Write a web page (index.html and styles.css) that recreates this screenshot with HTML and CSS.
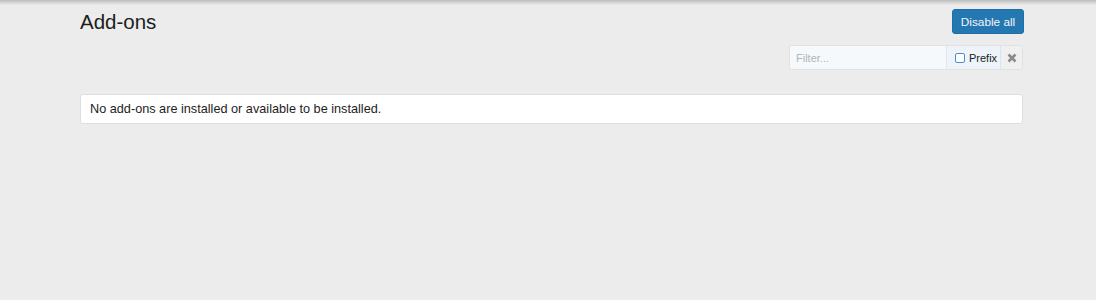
FILE: index.html
```html
<!DOCTYPE html>
<html>
<head>
<meta charset="utf-8">
<link rel="stylesheet" href="styles.css">
</head>
<body>
<div class="shadow"></div>
<div class="page">
  <div class="header">
    <h1 class="title">Add-ons</h1>
    <button class="btn">Disable all</button>
  </div>
  <div class="filter-row">
    <div class="filter">
      <input class="filter-input" type="text" placeholder="Filter...">
      <label class="prefix"><span class="check"></span>Prefix</label>
      <span class="clear"><svg width="10" height="10" viewBox="0 0 10 10"><path d="M1.5 1.5 L8.5 8.5 M8.5 1.5 L1.5 8.5" stroke="#8a8a8a" stroke-width="2.6" stroke-linecap="butt"/></svg></span>
    </div>
  </div>
  <div class="block">No add-ons are installed or available to be installed.</div>
</div>
</body>
</html>
```
FILE: styles.css
```css
html, body {
  margin: 0;
  padding: 0;
  background: #ececec;
  font-family: "Liberation Sans", Arial, sans-serif;
  color: #141414;
}
.shadow {
  position: fixed;
  top: 0;
  left: 0;
  right: 0;
  height: 5px;
  background: linear-gradient(to bottom, #bdbdbd, rgba(236,236,236,0));
}
.page {
  margin: 0 72px 0 80px;
  padding-top: 9px;
}
.header {
  display: flex;
  align-items: center;
  justify-content: space-between;
  height: 25px;
}
.title {
  margin: 0;
  font-size: 20.5px;
  font-weight: normal;
  line-height: 25px;
  color: #1d1d1d;
}
.btn {
  height: 25px;
  width: 72px;
  padding: 0;
  border: 1px solid #1f6ea6;
  border-radius: 3px;
  background: #2577b1;
  color: #f2f6fa;
  font-family: "Liberation Sans", Arial, sans-serif;
  font-size: 11.8px;
}
.filter-row {
  display: flex;
  justify-content: flex-end;
  margin-top: 11px;
  margin-right: 1px;
}
.filter {
  display: flex;
  height: 25px;
  border: 1px solid #e2e2e2;
  border-radius: 3px;
  box-sizing: border-box;
  overflow: hidden;
}
.filter-input {
  width: 157px;
  box-sizing: border-box;
  border: none;
  border-right: 1px solid #e4e8ec;
  background: #f6f9fc;
  padding: 0 6px;
  font-family: "Liberation Sans", Arial, sans-serif;
  font-size: 11px;
  color: #333;
  outline: none;
}
.filter-input::placeholder {
  color: #b0b4b8;
}
.prefix {
  display: flex;
  align-items: center;
  width: 54px;
  box-sizing: border-box;
  padding-left: 8px;
  background: #edf3f9;
  border-right: 1px solid #e0e3e6;
  font-size: 11px;
  color: #222;
}
.check {
  width: 8px;
  height: 8px;
  border: 1px solid #4a8ad0;
  border-radius: 2px;
  background: #fff;
  margin-right: 4px;
}
.clear {
  display: flex;
  align-items: center;
  justify-content: center;
  width: 21px;
  background: #f0f0f0;
}
.block {
  margin-top: 24px;
  margin-right: 1px;
  height: 30px;
  box-sizing: border-box;
  background: #ffffff;
  border: 1px solid #dedede;
  border-radius: 3px;
  padding: 0 9px;
  display: flex;
  align-items: center;
  font-size: 12.7px;
  color: #1d1d1d;
}
```
